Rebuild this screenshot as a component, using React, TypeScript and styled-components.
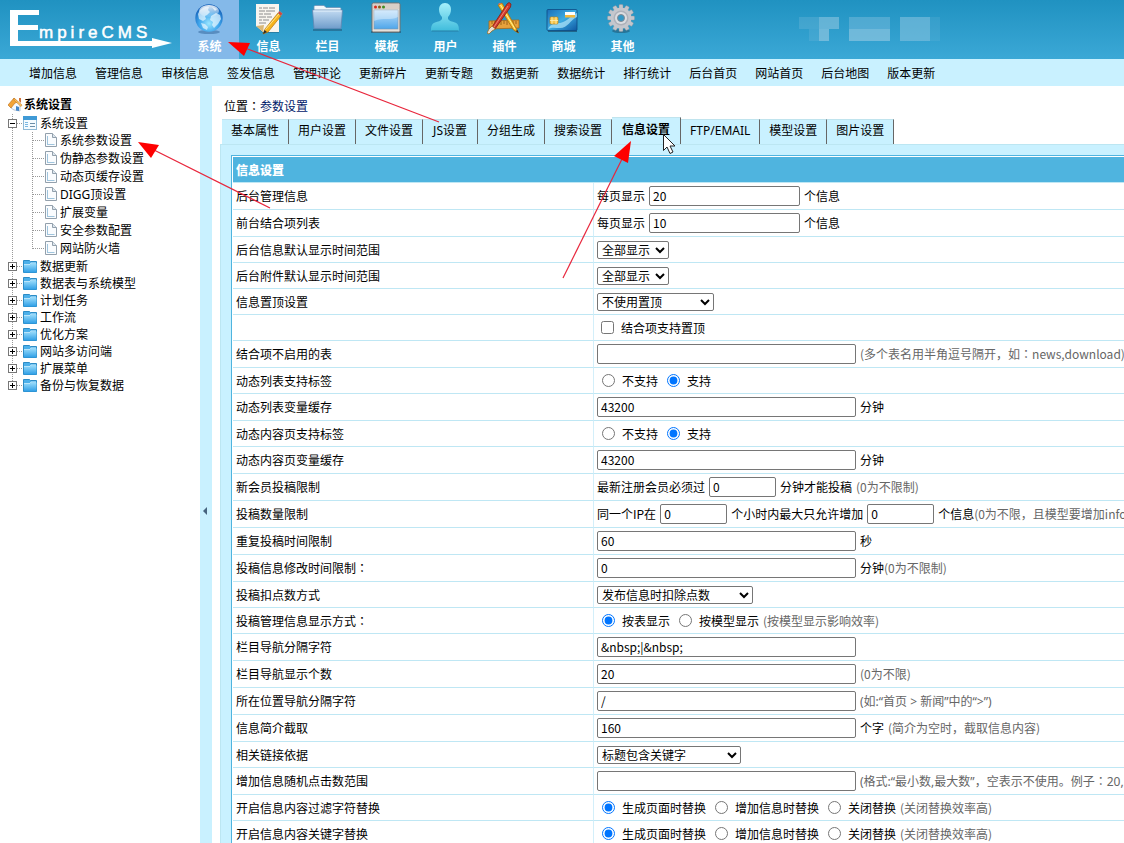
import React from 'react';
import styled, { createGlobalStyle } from 'styled-components';

const latinFirst = '"Noto Sans", "Noto Sans CJK SC", sans-serif';
const cjkFirst = '"Noto Sans CJK SC", sans-serif';

const GlobalStyle = createGlobalStyle`
  *, *::before, *::after { box-sizing: border-box; }
  body {
    margin: 0;
    background: #fff;
    color: #000;
    font-family: ${cjkFirst};
    font-size: 12px;
  }
  ul { list-style: none; margin: 0; padding: 0; }
  a { color: inherit; text-decoration: none; }
  button, input, select { font: inherit; color: inherit; }
`;

const Page = styled.div`
  position: relative;
  display: flex;
  flex-direction: column;
  height: 100vh;
  overflow: hidden;
`;

/* ---------- top bar ---------- */

const TopBar = styled.header`
  display: flex;
  flex: none;
  height: 59px;
  background: linear-gradient(#2092c1, #3ba8d6);
`;

const Logo = styled.a`
  width: 180px;
`;

const MainNav = styled.nav`
  display: flex;
`;

const MainNavItem = styled.a<{ $active?: boolean }>`
  display: flex;
  flex-direction: column;
  align-items: center;
  gap: 1px;
  width: 59px;
  color: #fff;
  font-weight: 700;
  line-height: 18px;
  background: ${(p) => (p.$active ? '#84b9e9' : 'transparent')};
`;

const UserInfo = styled.div`
  padding: 17px 0 0 146px;
`;

const SubNav = styled.nav`
  display: flex;
  flex: none;
  gap: 18px;
  height: 27px;
  padding-left: 29px;
  background: #c9f1ff;
  line-height: 28px;
  white-space: nowrap;
`;

/* ---------- sidebar ---------- */

const Columns = styled.div`
  display: flex;
  flex: 1;
  min-height: 0;
`;

const Sidebar = styled.aside`
  flex: none;
  width: 200px;
  padding-top: 9px;
  font-family: ${latinFirst};
`;

const SidebarTitle = styled.div`
  display: flex;
  align-items: center;
  gap: 1px;
  height: 19px;
  padding-left: 8px;
  font-weight: 600;
  line-height: 19px;
`;

const Tree = styled.ul`
  background: repeating-linear-gradient(#999 0 1px, transparent 1px 2px) 12px 0 / 1px calc(100% - 9px) no-repeat;
`;

const SubTree = styled.ul`
  background: repeating-linear-gradient(#999 0 1px, transparent 1px 2px) 32px 0 / 1px calc(100% - 9px) no-repeat;
`;

const TreeRow = styled.div<{ $tall?: boolean; $leaf?: boolean }>`
  display: flex;
  align-items: center;
  height: ${(p) => (p.$tall ? 18 : 17)}px;
  padding: ${(p) => (p.$leaf ? '0 0 2px 33px' : '0 0 0 8px')};
  line-height: 17px;
  white-space: nowrap;
`;

const Toggle = styled.button`
  display: block;
  width: 9px;
  height: 9px;
  padding: 0;
  border: 0;
  background: #fff;
  line-height: 0;
`;

const Dash = styled.span<{ $long?: boolean }>`
  width: ${(p) => (p.$long ? 12 : 6)}px;
  height: 1px;
  background: repeating-linear-gradient(90deg, #999 0 1px, transparent 1px 2px);
`;

const TreeLink = styled.a`
  padding-left: 3px;
`;

const Splitter = styled.button`
  display: flex;
  align-items: center;
  flex: none;
  width: 12px;
  padding: 93px 0 0 3px;
  border: 0;
  background: #c9f1ff;
`;

/* ---------- content ---------- */

const Main = styled.main`
  flex: 1;
  display: flex;
  flex-direction: column;
  min-width: 0;
  padding: 11px 0 0 8px;
`;

const Breadcrumb = styled.div`
  padding-left: 4px;
  line-height: 18px;
  a { color: #00206a; }
`;

const Tabs = styled.div`
  display: flex;
  align-items: flex-end;
  height: 29px;
  padding-left: 2px;
  font-family: ${latinFirst};
`;

const Tab = styled.button<{ $active?: boolean }>`
  min-width: 55px;
  height: ${(p) => (p.$active ? 27 : 25)}px;
  padding: ${(p) => (p.$active ? '0 10px 3px' : '0 9px 2px')};
  border: 0;
  border-top: 1px solid #c0e4ee;
  border-right: 1px solid #666;
  background: #c9f1ff;
  font-weight: ${(p) => (p.$active ? 700 : 400)};
  line-height: 22px;
  white-space: nowrap;
`;

const Panel = styled.div`
  flex: 1;
  min-height: 0;
  overflow: hidden;
  padding: 10px 0 0 10px;
  border-top: 1px solid #bce6f2;
  border-left: 1px solid #bce6f2;
  background: #c9f1ff;
`;

const Card = styled.div`
  padding: 1px 0 0 1px;
  border-top: 1px solid #4fb4df;
  border-left: 1px solid #4fb4df;
  background: #fff;
`;

const SettingsTable = styled.table`
  width: 100%;
  table-layout: fixed;
  border-collapse: separate;
  border-spacing: 0;
`;

const LabelCol = styled.col`
  width: 361px;
`;

const TableTitle = styled.th`
  height: 26px;
  padding: 0 0 0 3px;
  border-bottom: 1px solid #bfe7f4;
  background: #4fb4df;
  color: #fff;
  font-weight: 900;
  line-height: 18px;
  text-align: left;
`;

const NameCell = styled.th<{ $tall?: boolean }>`
  height: ${(p) => (p.$tall ? 27 : 26)}px;
  padding: 0 0 0 3px;
  border-right: 1px solid #d3effa;
  border-bottom: 1px solid #bfe7f4;
  font-weight: 400;
  line-height: 18px;
  text-align: left;
`;

const ValueCell = styled.td`
  padding: 0 0 0 3px;
  border-bottom: 1px solid #bfe7f4;
  overflow: hidden;
`;

const Line = styled.div`
  display: flex;
  align-items: center;
  gap: 4px;
  line-height: 18px;
  white-space: nowrap;
`;

const Hint = styled.span`
  color: #666;
`;

const Quoted = styled.span`
  font-family: ${latinFirst};
`;

/* the Traditional face centres the full-width colon in its square */
const ColonMark = styled.span`
  font-family: "Noto Sans CJK TC", sans-serif;
`;

const Colon = () => <ColonMark>：</ColonMark>;

const inputWidths = { small: 67, medium: 151, large: 259 };

const TextInput = styled.input<{ $size: keyof typeof inputWidths }>`
  flex: none;
  width: ${(p) => inputWidths[p.$size]}px;
  height: 20px;
  padding: 0 3px 2px;
  border: 1px solid #767676;
  border-radius: 2px;
  background: #fff;
`;

const SelectBox = styled.span`
  position: relative;
  display: flex;
  svg {
    position: absolute;
    top: 6px;
    right: 4px;
    pointer-events: none;
  }
`;

const Select = styled.select<{ $width: number }>`
  appearance: none;
  width: ${(p) => p.$width}px;
  height: 18px;
  padding: 0 4px;
  border: 1px solid #767676;
  border-radius: 2px;
  background-color: #fff;
  line-height: 16px;
`;

const Choice = styled.label`
  display: flex;
  align-items: center;
  gap: 4px;
  input { width: 13px; height: 13px; margin: 0 3px 0 5px; }
  input[type='checkbox'] { margin-left: 4px; }
`;

const Annotations = styled.svg`
  position: absolute;
  top: 0;
  left: 0;
  pointer-events: none;
`;

/* ---------- icons ---------- */

const iconProps = { width: 35, height: 36, viewBox: '0 0 35 36', 'aria-hidden': true } as const;

const GlobeIcon = () => (
  <svg {...iconProps}>
    <defs>
      <radialGradient id="globe" cx=".5" cy=".7" r=".65">
        <stop offset="0" stopColor="#9be6ff" />
        <stop offset=".55" stopColor="#3fa6ec" />
        <stop offset="1" stopColor="#1460b8" />
      </radialGradient>
      <linearGradient id="gloss" x1="0" y1="0" x2="0" y2="1">
        <stop offset="0" stopColor="#fff" stopOpacity=".9" />
        <stop offset="1" stopColor="#fff" stopOpacity=".1" />
      </linearGradient>
    </defs>
    <ellipse cx="17" cy="32" rx="11" ry="2" fill="#24588f" opacity=".45" />
    <circle cx="17" cy="18" r="13.7" fill="url(#globe)" />
    <path d="M8 10c3-3 7-4 9-3l-1 3 2 2-3 3-2 1 1 3-3 2-4-2-1-5z" fill="#e9f8ff" opacity=".7" />
    <path d="M19 16l5-3 4 2 1 4-3 5-4 4-2-3 1-3-3-2zM9 23l4 1 3 3-1 3-4-2zM20 7l5 2-2 2z" fill="#e9f8ff" opacity=".7" />
    <ellipse cx="17" cy="11" rx="10" ry="6" fill="url(#gloss)" />
  </svg>
);

const NoteIcon = () => (
  <svg {...iconProps}>
    <path d="M6 5h22v28H12l-6-6z" fill="#245d7c" opacity=".5" />
    <path d="M5 4h23v28H12l-7-6z" fill="#f8f5ef" />
    <path d="M5 26l8-1-1 7z" fill="#d9b878" />
    <path d="M8 8h3M12 8h5M18 8h6M8 11h6M15 11h9M8 14h4M13 14h7M8 17h7M16 17h5M8 20h3M12 20h6M8 23h7" stroke="#8c8c8c" strokeWidth="1" />
    <path d="M12 34l2-5L27 13l3 3-13 16z" fill="#f5b41d" stroke="#b3720c" strokeWidth=".7" />
    <path d="M14.5 29.5L28 14" stroke="#ffe58a" strokeWidth="1" />
    <path d="M12 34l1.5-4 2.500 2z" fill="#2b2b2b" />
    <path d="M27 13l1.500-2 3 2.500-1.500 2.500z" fill="#d6453c" stroke="#999" strokeWidth=".5" />
  </svg>
);

const FolderIcon = () => (
  <svg {...iconProps}>
    <defs>
      <linearGradient id="folderBig" x1="0" y1="0" x2="0" y2="1">
        <stop offset="0" stopColor="#c3dbf2" />
        <stop offset="1" stopColor="#6f9dcb" />
      </linearGradient>
    </defs>
    <path d="M3 29h29v2H3z" fill="#1e4f70" opacity=".5" />
    <path d="M4 12V6.500L5 5.500h9l2 2h14l1 1V12z" fill="#f2f7fb" stroke="#6c93b8" strokeWidth=".8" />
    <path d="M2.500 10h30l-1.500 18.500H4z" fill="url(#folderBig)" stroke="#5f88b3" strokeWidth=".8" />
    <path d="M3.500 11h28" stroke="#e5f1fb" />
  </svg>
);

const WindowIcon = () => (
  <svg {...iconProps}>
    <defs>
      <linearGradient id="pane" x1="0" y1="0" x2="0" y2="1">
        <stop offset="0" stopColor="#bfe0fb" />
        <stop offset="1" stopColor="#4ea6ea" />
      </linearGradient>
    </defs>
    <path d="M2 31h30v2H2z" fill="#25506b" opacity=".6" />
    <rect x="3" y="3" width="28" height="29" rx="1.500" fill="#e6e1dc" stroke="#77706b" />
    <path d="M4 4h26v5H4z" fill="#d8cfc7" />
    <circle cx="6.500" cy="7" r="1.500" fill="#d9281c" />
    <circle cx="10.500" cy="7" r="1.500" fill="#8a5a14" />
    <circle cx="14.500" cy="7" r="1.500" fill="#3f8d22" />
    <rect x="5" y="10" width="24" height="19" fill="url(#pane)" stroke="#7d98ad" strokeWidth=".6" />
    <path d="M5 10h24v7c-8 4-14 0-24 4z" fill="#fff" opacity=".35" />
  </svg>
);

const UserIcon = () => (
  <svg {...iconProps}>
    <defs>
      <linearGradient id="user" x1="0" y1="0" x2="0" y2="1">
        <stop offset="0" stopColor="#a6f0fb" />
        <stop offset="1" stopColor="#3fbcdc" />
      </linearGradient>
    </defs>
    <path d="M17 3c4 0 6 3 6 6.500 0 3-1.200 6-3 7.500v2c1 2 4 2.500 7 3.500 3 1.200 4 3 4 8.500H3c0-5.500 1-7.300 4-8.500 3-1 6-1.500 7-3.500v-2c-1.800-1.500-3-4.500-3-7.500C11 6 13 3 17 3z" fill="url(#user)" />
    <path d="M3.500 31h27" stroke="#267fa5" />
  </svg>
);

const ToolsIcon = () => (
  <svg {...iconProps}>
    <path d="M2 21l30-1v8l-30 1z" fill="#e6a13c" stroke="#a86818" strokeWidth=".8" />
    <path d="M5 21v3M8 21v4M11 21v3M14 21v4M17 21v3M20 21v4M23 21v3M26 21v4M29 21v3" stroke="#8d5710" strokeWidth=".8" />
    <path d="M11 5l4-2 14 25 2.500 5-5-3z" fill="#f7bd2c" stroke="#a86c10" strokeWidth=".8" />
    <path d="M13.500 5L28 29" stroke="#fff0a0" strokeWidth="1" />
    <path d="M31.500 33l-1-3-2 1z" fill="#222" />
    <path d="M11 5l1-2 3 0z" fill="#e46a5e" />
    <path d="M20 4l2-1.500 2 1.500-.5 3L8 29l-3-2z" fill="#d23a2b" stroke="#851c14" strokeWidth=".8" />
    <path d="M21 6L7 27" stroke="#f39a8c" strokeWidth=".8" />
    <path d="M5 26l3.500 3L5 31l-3 3-2-1 2-4z" fill="#e8dfd0" stroke="#93620f" strokeWidth=".7" />
  </svg>
);

const CardIcon = () => (
  <svg {...iconProps}>
    <defs>
      <linearGradient id="card" x1="0" y1="0" x2="1" y2="1">
        <stop offset="0" stopColor="#1b6fb8" />
        <stop offset=".5" stopColor="#3cabe2" />
        <stop offset="1" stopColor="#0e58a3" />
      </linearGradient>
    </defs>
    <path d="M2 30h29v2H2z" fill="#173f5c" opacity=".6" />
    <rect x="1" y="9.500" width="30" height="21" rx="1" fill="url(#card)" stroke="#0c4a83" strokeWidth=".8" />
    <path d="M2 29c3-6 8-6 12-6 7-1 11-8 17-10v4c-7 3-9 11-17 11-5 0-8-1-12 1z" fill="#a9e1f8" opacity=".75" />
    <rect x="4" y="17" width="8" height="7" rx="1" fill="#f7c64b" stroke="#b8831b" strokeWidth=".7" />
    <path d="M6 17v7M10 17v7M4 20.500h8" stroke="#fff0b5" strokeWidth=".8" />
    <rect x="19" y="12" width="10" height="3" fill="#fff" />
    <rect x="19" y="15" width="10" height="2.500" fill="#f0b73d" />
  </svg>
);

const GearIcon = () => (
  <svg {...iconProps}>
    <ellipse cx="16" cy="31" rx="9" ry="2" fill="#1e4c66" opacity=".5" />
    {[0, 30, 60, 90, 120, 150].map((a) => (
      <rect key={a} x="14" y="4.500" width="4" height="27" rx="1" fill="#c3c6cc" stroke="#8f939b" strokeWidth=".4" transform={`rotate(${a} 16 18)`} />
    ))}
    <circle cx="16" cy="18" r="10.500" fill="#c5c7cd" />
    <circle cx="16" cy="18" r="7.500" fill="#aeb2ba" />
    <circle cx="16" cy="18" r="6" fill="#dcdee2" />
    <circle cx="16" cy="18" r="3.500" fill="#3599c6" stroke="#858a93" />
  </svg>
);

const HomeIcon = () => (
  <svg width="15" height="15" viewBox="0 0 15 15" aria-hidden>
    <path d="M3 7l4-4 5 5v6l-6-1-3-2z" fill="#f7f9fc" stroke="#8fa5bd" strokeWidth=".6" />
    <path d="M0 8l6-7 4 4-3 1-4 5z" fill="#f3a437" stroke="#b76b18" strokeWidth=".6" />
    <path d="M6 1l8 7-1 1.500L6 3z" fill="#ffc765" stroke="#c47a22" strokeWidth=".6" />
    <path d="M8 9l3 1v4l-3-.5z" fill="#4487ca" />
    <path d="M11 1h2v5l-2-2z" fill="#d0733c" />
  </svg>
);

const PanelIcon = () => (
  <svg width="14" height="14" viewBox="0 0 14 14" aria-hidden>
    <rect x=".5" y=".5" width="13" height="13" fill="#f5fbff" stroke="#8fb9d6" />
    <rect x="0" y="0" width="14" height="4" fill="#3f9ad6" />
    <path d="M2 6.500h3M2 8.500h3M2 10.500h3" stroke="#7ab7e2" />
    <path d="M7 7.500h5M7 10.500h5" stroke="#6c8ea8" />
  </svg>
);

const SmallFolderIcon = () => (
  <svg width="14" height="13" viewBox="0 0 14 13" aria-hidden>
    <defs>
      <linearGradient id="folderSmall" x1="0" y1="0" x2="0" y2="1">
        <stop offset="0" stopColor="#9adcfb" />
        <stop offset="1" stopColor="#2d9ee6" />
      </linearGradient>
    </defs>
    <path d="M.5 12.500V.5h6l1 1h6v11z" fill="#4cb0ea" stroke="#2c8cc6" />
    <path d="M1 5h6l1-1.500h5.500v9H1z" fill="url(#folderSmall)" />
    <path d="M1 4.500h6l1-1.500h5" stroke="#d6f2ff" fill="none" strokeWidth=".8" />
  </svg>
);

const PageIcon = () => (
  <svg width="12" height="14" viewBox="0 0 12 14" aria-hidden>
    <path d="M.5.5h7l4 4v9H.5z" fill="#fafcfe" stroke="#93a0ac" />
    <path d="M7.500.5v4h4" fill="#dce6ee" stroke="#93a0ac" />
    <path d="M2.500 3v9M2.500 11.500h7" stroke="#9fc4dd" fill="none" />
  </svg>
);

const ToggleGlyph = ({ open }: { open?: boolean }) => (
  <svg width="9" height="9" viewBox="0 0 9 9" aria-hidden>
    <rect x=".5" y=".5" width="8" height="8" fill="#fff" stroke="#777" />
    <path d={open ? 'M2 4.500h5' : 'M2 4.500h5M4.500 2v5'} stroke="#000" />
  </svg>
);

/* ---------- data ---------- */

const mainNav: [string, React.FC][] = [
  ['系统', GlobeIcon],
  ['信息', NoteIcon],
  ['栏目', FolderIcon],
  ['模板', WindowIcon],
  ['用户', UserIcon],
  ['插件', ToolsIcon],
  ['商城', CardIcon],
  ['其他', GearIcon],
];

const subNav = [
  '增加信息', '管理信息', '审核信息', '签发信息', '管理评论', '更新碎片', '更新专题',
  '数据更新', '数据统计', '排行统计', '后台首页', '网站首页', '后台地图', '版本更新',
];

const systemPages = [
  '系统参数设置', '伪静态参数设置', '动态页缓存设置', 'DIGG顶设置', '扩展变量', '安全参数配置', '网站防火墙',
];

const treeFolders = [
  '数据更新', '数据表与系统模型', '计划任务', '工作流', '优化方案', '网站多访问端', '扩展菜单', '备份与恢复数据',
];

const tabs = [
  '基本属性', '用户设置', '文件设置', 'JS设置', '分组生成', '搜索设置', '信息设置', 'FTP/EMAIL', '模型设置', '图片设置',
];

/* ---------- form pieces ---------- */

const Field = ({ name, tall, children }: { name: React.ReactNode; tall?: boolean; children: React.ReactNode }) => (
  <tr>
    <NameCell scope="row" $tall={tall}>{name}</NameCell>
    <ValueCell><Line>{children}</Line></ValueCell>
  </tr>
);

type InputFieldProps = {
  id: string;
  label: React.ReactNode;
  value?: string;
  size?: keyof typeof inputWidths;
  before?: string;
  children?: React.ReactNode;
};

const InputField = ({ id, label, value = '', size = 'large', before, children }: InputFieldProps) => (
  <Field tall name={<label htmlFor={id}>{label}</label>}>
    {before && <span>{before}</span>}
    <TextInput id={id} $size={size} defaultValue={value} />
    {children}
  </Field>
);

const SelectField = ({ id, label, value, width }: { id: string; label: string; value: string; width: number }) => (
  <Field name={<label htmlFor={id}>{label}</label>}>
    <SelectBox>
      <Select id={id} $width={width}><option>{value}</option></Select>
      <svg width="10" height="7" viewBox="0 0 10 7" aria-hidden>
        <path d="M1 1l4 4 4-4" fill="none" stroke="#000" strokeWidth="2" />
      </svg>
    </SelectBox>
  </Field>
);

type RadioFieldProps = { id: string; label: React.ReactNode; options: string[]; selected: number; hint?: string };

const RadioField = ({ id, label, options, selected, hint }: RadioFieldProps) => (
  <Field name={label}>
    {options.map((option, i) => (
      <Choice key={option}>
        <input type="radio" name={id} defaultChecked={i === selected} />
        {option}
      </Choice>
    ))}
    {hint && <Hint>{hint}</Hint>}
  </Field>
);

export default function App() {
  return (
    <Page>
      <GlobalStyle />
      <TopBar>
        <Logo href="#" aria-label="EmpireCMS">
          <svg width="180" height="59" viewBox="0 0 180 59">
            <path d="M10 10h29v5H18v10h20v5H18v11h134v-3l20 5-20 5v-2H10z" fill="#fff" />
            <text x="39" y="38" fill="#fff" stroke="#fff" strokeWidth=".5" fontFamily="Liberation Sans, sans-serif" fontSize="17" letterSpacing="4">mpireCMS</text>
          </svg>
        </Logo>
        <MainNav>
          {mainNav.map(([label, Icon], i) => (
            <MainNavItem key={label} href="#" $active={i === 0}>
              <Icon />
              {label}
            </MainNavItem>
          ))}
        </MainNav>
        <UserInfo>
          <svg width="146" height="24" viewBox="0 0 146 24" aria-hidden>
            <g fill="#8cc4e0">
              <rect x="1" width="20" height="12" opacity=".25" />
              <rect x="11" y="12" width="10" height="12" opacity=".2" />
              <rect x="21" width="20" height="12" opacity=".6" />
              <rect x="21" y="12" width="10" height="12" opacity=".7" />
              <rect x="51" width="41" height="12" opacity=".4" />
              <rect x="51" y="12" width="41" height="12" opacity=".7" />
              <rect x="102" width="30" height="24" opacity=".55" />
              <rect x="132" width="10" height="24" opacity=".15" />
            </g>
          </svg>
        </UserInfo>
      </TopBar>
      <SubNav>
        {subNav.map((label) => <a key={label} href="#">{label}</a>)}
      </SubNav>
      <Columns>
        <Sidebar>
          <SidebarTitle><HomeIcon />系统设置</SidebarTitle>
          <Tree>
            <li>
              <TreeRow $tall>
                <Toggle aria-label="收起"><ToggleGlyph open /></Toggle>
                <Dash />
                <PanelIcon />
                <TreeLink href="#">系统设置</TreeLink>
              </TreeRow>
              <SubTree>
                {systemPages.map((label) => (
                  <li key={label}>
                    <TreeRow $tall $leaf>
                      <Dash $long />
                      <PageIcon />
                      <TreeLink href="#">{label}</TreeLink>
                    </TreeRow>
                  </li>
                ))}
              </SubTree>
            </li>
            {treeFolders.map((label) => (
              <li key={label}>
                <TreeRow>
                  <Toggle aria-label="展开"><ToggleGlyph /></Toggle>
                  <Dash />
                  <SmallFolderIcon />
                  <TreeLink href="#">{label}</TreeLink>
                </TreeRow>
              </li>
            ))}
          </Tree>
        </Sidebar>
        <Splitter aria-label="隐藏侧栏">
          <svg width="5" height="8" viewBox="0 0 5 8" aria-hidden><path d="M0 4l4-4v8z" fill="#46647f" /></svg>
        </Splitter>
        <Main>
          <Breadcrumb>位置<Colon /><a href="#">参数设置</a></Breadcrumb>
          <Tabs role="tablist">
            {tabs.map((label) => (
              <Tab key={label} role="tab" aria-selected={label === '信息设置'} $active={label === '信息设置'}>{label}</Tab>
            ))}
          </Tabs>
          <Panel>
            <Card>
              <SettingsTable>
                <colgroup><LabelCol /><col /></colgroup>
                <thead>
                  <tr><TableTitle colSpan={2}>信息设置</TableTitle></tr>
                </thead>
                <tbody>
                  <InputField id="adminPage" label="后台管理信息" value="20" size="medium" before="每页显示">个信息</InputField>
                  <InputField id="listPage" label="前台结合项列表" value="10" size="medium" before="每页显示">个信息</InputField>
                  <SelectField id="infoRange" label="后台信息默认显示时间范围" value="全部显示" width={72} />
                  <SelectField id="fileRange" label="后台附件默认显示时间范围" value="全部显示" width={72} />
                  <SelectField id="sticky" label="信息置顶设置" value="不使用置顶" width={117} />
                  <Field name="">
                    <Choice><input type="checkbox" />结合项支持置顶</Choice>
                  </Field>
                  <InputField id="closedTables" label="结合项不启用的表">
                    <Hint>(多个表名用半角逗号隔开，如<Colon />news,download)</Hint>
                  </InputField>
                  <RadioField id="listTags" label="动态列表支持标签" options={['不支持', '支持']} selected={1} />
                  <InputField id="listCache" label="动态列表变量缓存" value="43200">分钟</InputField>
                  <RadioField id="pageTags" label="动态内容页支持标签" options={['不支持', '支持']} selected={1} />
                  <InputField id="pageCache" label="动态内容页变量缓存" value="43200">分钟</InputField>
                  <InputField id="newMember" label="新会员投稿限制" value="0" size="small" before="最新注册会员必须过">
                    分钟才能投稿<Hint>(0为不限制)</Hint>
                  </InputField>
                  <InputField id="ipHours" label="投稿数量限制" value="0" size="small" before="同一个IP在">
                    个小时内最大只允许增加
                    <TextInput $size="small" defaultValue="0" aria-label="最大只允许增加" />
                    <span>个信息<Hint>(0为不限，且模型要增加info</Hint></span>
                  </InputField>
                  <InputField id="repeatTime" label="重复投稿时间限制" value="60">秒</InputField>
                  <InputField id="editTime" label={<>投稿信息修改时间限制<Colon /></>} value="0">
                    <span>分钟<Hint>(0为不限制)</Hint></span>
                  </InputField>
                  <SelectField id="points" label="投稿扣点数方式" value="发布信息时扣除点数" width={156} />
                  <RadioField id="display" label={<>投稿管理信息显示方式<Colon /></>} options={['按表显示', '按模型显示']} selected={0} hint="(按模型显示影响效率)" />
                  <InputField id="navSep" label="栏目导航分隔字符" value="&amp;nbsp;|&amp;nbsp;" />
                  <InputField id="navCount" label="栏目导航显示个数" value="20"><Hint>(0为不限)</Hint></InputField>
                  <InputField id="pathSep" label="所在位置导航分隔字符" value="/">
                    <Hint><Quoted>(如:“首页 &gt; 新闻”中的“&gt;”)</Quoted></Hint>
                  </InputField>
                  <InputField id="summary" label="信息简介截取" value="160">
                    个字<Hint>(简介为空时，截取信息内容)</Hint>
                  </InputField>
                  <SelectField id="related" label="相关链接依据" value="标题包含关键字" width={144} />
                  <InputField id="randomHits" label="增加信息随机点击数范围">
                    <Hint><Quoted>(格式:“最小数,最大数”，空表示不使用。例子<Colon />20,</Quoted></Hint>
                  </InputField>
                  <RadioField id="filterReplace" label="开启信息内容过滤字符替换" options={['生成页面时替换', '增加信息时替换', '关闭替换']} selected={0} hint="(关闭替换效率高)" />
                  <RadioField id="keyReplace" label="开启信息内容关键字替换" options={['生成页面时替换', '增加信息时替换', '关闭替换']} selected={0} hint="(关闭替换效率高)" />
                </tbody>
              </SettingsTable>
            </Card>
          </Panel>
        </Main>
      </Columns>
      <Annotations width="700" height="300" viewBox="0 0 700 300" aria-hidden>
        <g stroke="#e8263c" strokeWidth="1.200">
          <path d="M439 122L245 48" />
          <path d="M270 208L152 149" />
          <path d="M563 278L622 159" />
        </g>
        <g fill="#fe0000">
          <path d="M228 42l22 1-6 13z" />
          <path d="M138 142l21 3-8 13z" />
          <path d="M631 141l-17 15 14 7z" />
        </g>
        <path d="M663.500 134.500v16l3.500-3.500 3 6.500 3-1.500-3-6h5z" fill="#fff" stroke="#222" />
      </Annotations>
    </Page>
  );
}
